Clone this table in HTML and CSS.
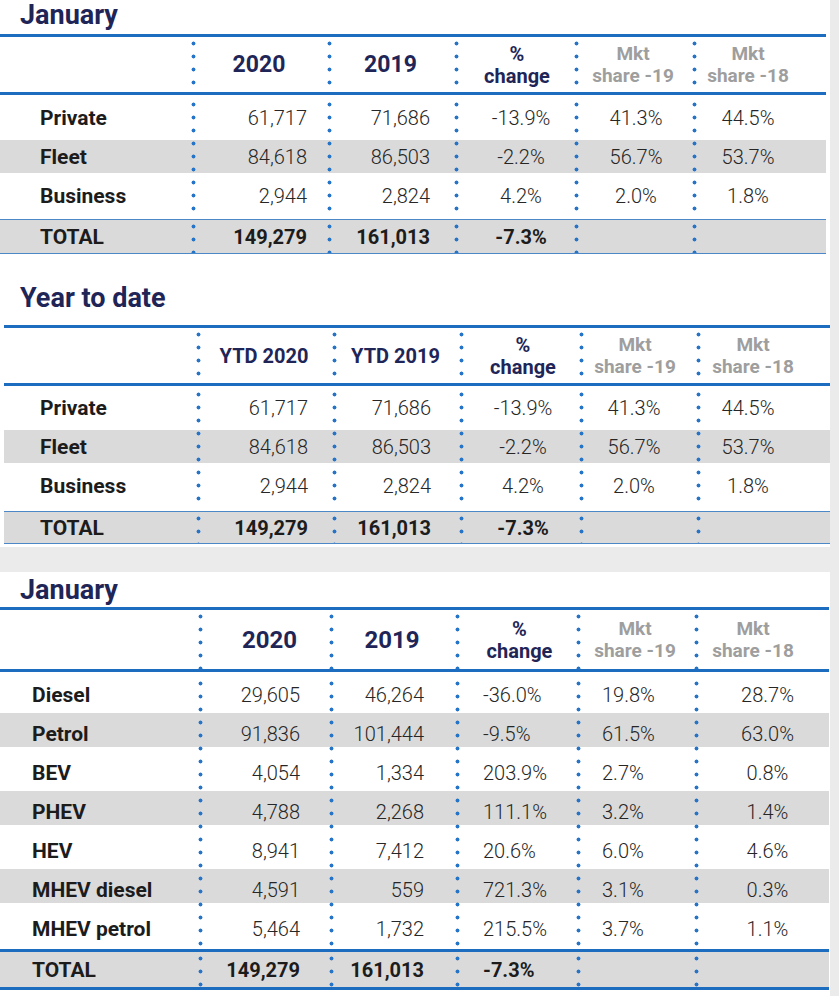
FILE: index.html
```html
<!DOCTYPE html>
<html lang="en">
<head>
<meta charset="utf-8">
<title>Registrations</title>
<link rel="stylesheet" href="styles.css">
</head>
<body>
<div class="panel panel-top">
  <h2 class="title title-1">January</h2>
  <div class="tbl t1">
    <div class="hdr">
      <div class="c c0"></div>
      <div class="c c1 sep h-year">2020</div>
      <div class="c c2 sep h-year">2019</div>
      <div class="c c3 sep h-chg"><span>%</span><span>change</span></div>
      <div class="c c4 sep h-mkt"><span>Mkt</span><span>share -19</span></div>
      <div class="c c5 sep h-mkt"><span>Mkt</span><span>share -18</span></div>
    </div>
    <div class="rows">
      <div class="row"><div class="c c0 lbl">Private</div><div class="c c1 sep">61,717</div><div class="c c2 sep">71,686</div><div class="c c3 sep">-13.9%</div><div class="c c4 sep">41.3%</div><div class="c c5 sep">44.5%</div></div>
      <div class="row band"><div class="c c0 lbl">Fleet</div><div class="c c1 sep">84,618</div><div class="c c2 sep">86,503</div><div class="c c3 sep">-2.2%</div><div class="c c4 sep">56.7%</div><div class="c c5 sep">53.7%</div></div>
      <div class="row"><div class="c c0 lbl">Business</div><div class="c c1 sep">2,944</div><div class="c c2 sep">2,824</div><div class="c c3 sep">4.2%</div><div class="c c4 sep">2.0%</div><div class="c c5 sep">1.8%</div></div>
    </div>
    <div class="row total"><div class="c c0 lbl">TOTAL</div><div class="c c1 sep">149,279</div><div class="c c2 sep">161,013</div><div class="c c3 sep">-7.3%</div><div class="c c4 sep"></div><div class="c c5 sep"></div></div>
  </div>

  <h2 class="title title-2">Year to date</h2>
  <div class="tbl t2">
    <div class="hdr">
      <div class="c c0"></div>
      <div class="c c1 sep h-ytd">YTD 2020</div>
      <div class="c c2 sep h-ytd">YTD 2019</div>
      <div class="c c3 sep h-chg"><span>%</span><span>change</span></div>
      <div class="c c4 sep h-mkt"><span>Mkt</span><span>share -19</span></div>
      <div class="c c5 sep h-mkt"><span>Mkt</span><span>share -18</span></div>
    </div>
    <div class="rows">
      <div class="row"><div class="c c0 lbl">Private</div><div class="c c1 sep">61,717</div><div class="c c2 sep">71,686</div><div class="c c3 sep">-13.9%</div><div class="c c4 sep">41.3%</div><div class="c c5 sep">44.5%</div></div>
      <div class="row band"><div class="c c0 lbl">Fleet</div><div class="c c1 sep">84,618</div><div class="c c2 sep">86,503</div><div class="c c3 sep">-2.2%</div><div class="c c4 sep">56.7%</div><div class="c c5 sep">53.7%</div></div>
      <div class="row"><div class="c c0 lbl">Business</div><div class="c c1 sep">2,944</div><div class="c c2 sep">2,824</div><div class="c c3 sep">4.2%</div><div class="c c4 sep">2.0%</div><div class="c c5 sep">1.8%</div></div>
    </div>
    <div class="row total"><div class="c c0 lbl">TOTAL</div><div class="c c1 sep">149,279</div><div class="c c2 sep">161,013</div><div class="c c3 sep">-7.3%</div><div class="c c4 sep"></div><div class="c c5 sep"></div></div>
  </div>
</div>

<div class="panel panel-bottom">
  <h2 class="title title-3">January</h2>
  <div class="tbl t3">
    <div class="hdr">
      <div class="c c0"></div>
      <div class="c c1 sep h-year">2020</div>
      <div class="c c2 sep h-year">2019</div>
      <div class="c c3 sep h-chg"><span>%</span><span>change</span></div>
      <div class="c c4 sep h-mkt"><span>Mkt</span><span>share -19</span></div>
      <div class="c c5 sep h-mkt"><span>Mkt</span><span>share -18</span></div>
    </div>
    <div class="rows">
      <div class="row"><div class="c c0 lbl">Diesel</div><div class="c c1 sep">29,605</div><div class="c c2 sep">46,264</div><div class="c c3 sep">-36.0%</div><div class="c c4 sep">19.8%</div><div class="c c5 sep">28.7%</div></div>
      <div class="row band"><div class="c c0 lbl">Petrol</div><div class="c c1 sep">91,836</div><div class="c c2 sep">101,444</div><div class="c c3 sep">-9.5%</div><div class="c c4 sep">61.5%</div><div class="c c5 sep">63.0%</div></div>
      <div class="row"><div class="c c0 lbl">BEV</div><div class="c c1 sep">4,054</div><div class="c c2 sep">1,334</div><div class="c c3 sep">203.9%</div><div class="c c4 sep">2.7%</div><div class="c c5 sep">0.8%</div></div>
      <div class="row band"><div class="c c0 lbl">PHEV</div><div class="c c1 sep">4,788</div><div class="c c2 sep">2,268</div><div class="c c3 sep">111.1%</div><div class="c c4 sep">3.2%</div><div class="c c5 sep">1.4%</div></div>
      <div class="row"><div class="c c0 lbl">HEV</div><div class="c c1 sep">8,941</div><div class="c c2 sep">7,412</div><div class="c c3 sep">20.6%</div><div class="c c4 sep">6.0%</div><div class="c c5 sep">4.6%</div></div>
      <div class="row band"><div class="c c0 lbl">MHEV diesel</div><div class="c c1 sep">4,591</div><div class="c c2 sep">559</div><div class="c c3 sep">721.3%</div><div class="c c4 sep">3.1%</div><div class="c c5 sep">0.3%</div></div>
      <div class="row"><div class="c c0 lbl">MHEV petrol</div><div class="c c1 sep">5,464</div><div class="c c2 sep">1,732</div><div class="c c3 sep">215.5%</div><div class="c c4 sep">3.7%</div><div class="c c5 sep">1.1%</div></div>
    </div>
    <div class="row total"><div class="c c0 lbl">TOTAL</div><div class="c c1 sep">149,279</div><div class="c c2 sep">161,013</div><div class="c c3 sep">-7.3%</div><div class="c c4 sep"></div><div class="c c5 sep"></div></div>
  </div>
</div>
</body>
</html>
```

FILE: styles.css
```css
* { box-sizing: border-box; }

body {
  margin: 0;
  background: #ebebeb;
  font-family: Roboto, "Liberation Sans", sans-serif;
  color: #262626;
}

.panel {
  width: 830px;
  background: #ffffff;
}

.panel-top { height: 547px; }
.panel-bottom { height: 424px; margin-top: 25px; }

.title {
  margin: 0;
  padding-left: 20px;
  font-size: 27px;
  line-height: 30px;
  font-weight: 700;
  color: #1f2657;
}
.title-1 { height: 34px; }
.title-2 { padding-top: 29px; padding-bottom: 12px; }
.title-3 { padding-top: 3px; padding-bottom: 2px; }

/* tables */
.tbl { width: 826px; }
.t1 { --cols: 191px 136px 127px 120px 118px 134px; }
.t2 { --cols: 192px 136px 127px 120px 117px 134px; margin-left: 4px; }
.t3 { --cols: 198px 131px 126px 121px 118px 135px; width: 829px; }

.hdr, .row {
  display: grid;
  grid-template-columns: var(--cols);
}

.hdr {
  height: 61px;
  border-top: 3px solid #1c6cc0;
  border-bottom: 3px solid #1c6cc0;
}
.t3 .hdr { height: 65px; }

.rows { padding-top: 3px; }
.t2 .rows, .t3 .rows { padding-top: 2px; }

.row { height: 39px; }
.t3 .row { padding-top: 3px; }

.band {
  background: linear-gradient(#dadada, #dadada) 0 3px / 100% 33px no-repeat;
}
.t3 .band {
  background: linear-gradient(#dadada, #dadada) 0 0 / 100% 34px no-repeat;
}

.total {
  height: 35px;
  margin-top: 4px;
  background: #dadada;
  border-top: 1px solid #4c87c8;
  border-bottom: 1px solid #4c87c8;
}
.t2 .total { height: 33px; margin-top: 6px; }
.t3 .total {
  height: 41px;
  margin-top: 2px;
  padding-top: 0;
  border-top: 3px solid #1c6cc0;
  border-bottom: 3px solid #1c6cc0;
}

/* cells */
.c {
  display: flex;
  align-items: center;
  justify-content: center;
  font-size: 20px;
  font-weight: 300;
  color: #262626;
  white-space: nowrap;
}

.sep {
  background-image: radial-gradient(circle at 2.5px 6.5px, #2574c7 1.6px, rgba(37, 116, 199, 0) 2.3px);
  background-size: 5px 13px;
  background-repeat: repeat-y;
  background-position: 0 0;
}

.lbl {
  justify-content: flex-start;
  font-size: 21px;
  font-weight: 700;
  color: #1c1c1c;
}
.t1 .lbl { padding-left: 40px; }
.t2 .lbl { padding-left: 36px; }
.t3 .lbl { padding-left: 32px; }

.total .c { font-weight: 700; color: #1c1c1c; }

/* body column alignment */
.row .c1, .row .c2 { justify-content: flex-end; }
.t1 .row .c1 { padding-right: 20px; }
.t1 .row .c2 { padding-right: 24px; }
.t1 .row .c3 { padding-left: 14px; }
.t1 .row .c4 { padding-left: 6px; }
.t1 .row .c5 { padding-right: 22px; }

.t2 .row .c1 { padding-right: 24px; }
.t2 .row .c2 { padding-right: 28px; }
.t2 .row .c3 { padding-left: 8px; }
.t2 .row .c4 { padding-right: 7px; }
.t2 .row .c5 { padding-right: 30px; }

.t3 .row .c1 { padding-right: 29px; }
.t3 .row .c2 { padding-right: 31px; }
.t3 .row .c3 { justify-content: flex-start; padding-left: 28px; }
.t3 .row .c4 { justify-content: flex-start; padding-left: 26px; }
.t3 .row .c5 { padding-left: 12px; }

/* header */
.hdr .c {
  flex-direction: column;
  text-align: center;
  font-weight: 700;
  color: #1f2657;
}
.h-year { font-size: 23px; }
.t3 .h-year { font-size: 24px; }
.t3 .hdr .c1 { padding-left: 12px; }
.h-ytd { font-size: 20px; }
.h-chg { font-size: 20px; line-height: 22px; }
.h-mkt { font-size: 19px; line-height: 22px; }
.hdr .h-mkt { color: #9e9e9e; }

.t1 .hdr .c3 { padding-left: 6px; }
.t1 .hdr .c5 { padding-right: 22px; }
.t2 .hdr .c3 { padding-left: 8px; }
.t2 .hdr .c4 { padding-right: 5px; }
.t2 .hdr .c5 { padding-right: 20px; }
.t3 .hdr .c3 { padding-left: 8px; }
.t3 .hdr .c5 { padding-right: 17px; }
```
